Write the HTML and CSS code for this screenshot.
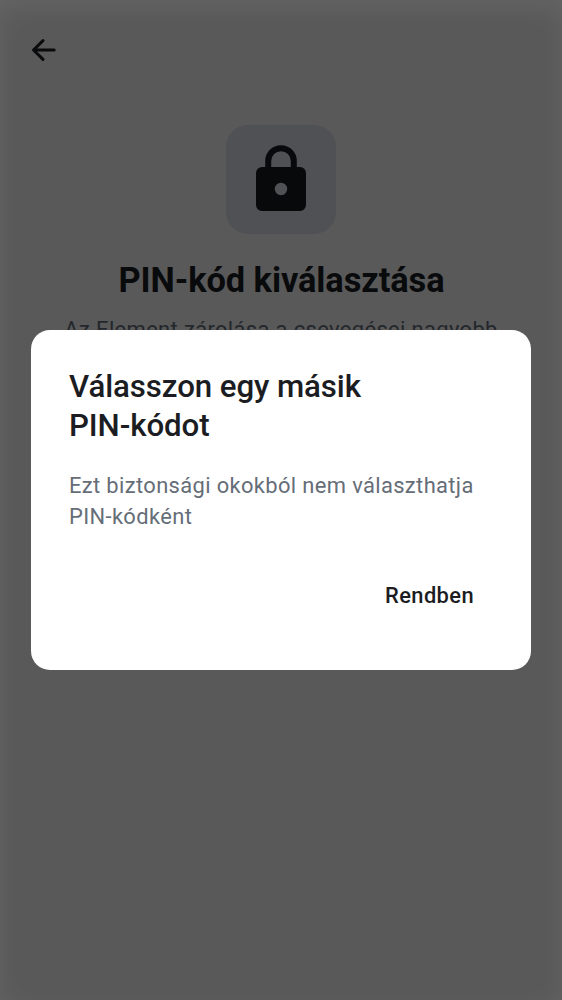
FILE: index.html
```html
<!DOCTYPE html>
<html lang="hu">
<head>
<meta charset="utf-8">
<title>PIN-kód kiválasztása</title>
<link rel="stylesheet" href="styles.css">
</head>
<body>
<main class="screen">
  <header class="topbar">
    <svg class="back" viewBox="0 0 38 38" aria-label="Vissza"><path d="M29.2 19H9M18 9.6L8.5 19L18 28.4" fill="none" stroke="currentColor" stroke-width="3" stroke-linecap="round" stroke-linejoin="round"/></svg>
  </header>
  <section class="intro">
    <div class="badge">
      <svg class="lock" viewBox="0 0 50 66"><path d="M12.2 25V16a12.8 12.8 0 0 1 25.6 0v9" fill="none" stroke="currentColor" stroke-width="6"/><path fill="currentColor" fill-rule="evenodd" d="M6 22H44A6 6 0 0 1 50 28V60A6 6 0 0 1 44 66H6A6 6 0 0 1 0 60V28A6 6 0 0 1 6 22ZM25 37.8a6.2 6.2 0 1 0 0 12.4a6.2 6.2 0 1 0 0-12.4Z"/></svg>
    </div>
    <h1 class="heading">PIN-kód kiválasztása</h1>
    <p class="summary">Az Element zárolása a csevegései nagyobb</p>
  </section>
  <div class="overlay">
    <div class="dialog" role="dialog">
      <h2 class="title">Válasszon egy másik<br>PIN-kódot</h2>
      <p class="message">Ezt biztonsági okokból nem választhatja<br>PIN-kódként</p>
      <div class="actions"><button class="confirm">Rendben</button></div>
    </div>
  </div>
</main>
</body>
</html>
```
FILE: styles.css
```css
* { box-sizing: border-box; }
body { margin: 0; font-family: Roboto, sans-serif; }
h1, h2, p { margin: 0; font-weight: 400; }
.screen {
  position: relative;
  width: 562px;
  height: 1000px;
  overflow: hidden;
  background: #595959;
}
.topbar { display: flex; align-items: center; height: 100px; padding-left: 25px; color: #0a0b0d; }
.back { width: 38px; height: 38px; }
.intro { display: flex; flex-direction: column; align-items: center; padding-top: 25px; }
.badge {
  display: flex;
  justify-content: center;
  width: 110px;
  height: 109px;
  padding-top: 20px;
  border-radius: 22px;
  background: #505155;
  color: #08090b;
}
.lock { width: 50px; height: 66px; }
.heading {
  margin-top: 25px;
  padding-left: 1px;
  font-size: 34.4px;
  line-height: 43px;
  font-weight: 700;
  letter-spacing: -.08px;
  white-space: nowrap;
  color: #090a0c;
}
.summary {
  margin-top: 12px;
  font-size: 21.9px;
  line-height: 31px;
  letter-spacing: .37px;
  white-space: nowrap;
  color: #23272c;
}
.overlay {
  position: absolute;
  inset: 0;
  display: flex;
  align-items: center;
  justify-content: center;
  box-shadow: inset 0 8px 26px 0 rgba(255, 255, 255, .07);
}
.dialog {
  width: 500px;
  height: 340px;
  padding: 37px 38px;
  border-radius: 19px;
  background: #fff;
}
.title {
  font-size: 31.25px;
  line-height: 39px;
  font-weight: 500;
  letter-spacing: -.09px;
  color: #1b1d22;
}
.message {
  margin-top: 25px;
  font-size: 21.9px;
  line-height: 31.2px;
  letter-spacing: .37px;
  white-space: nowrap;
  color: #656d77;
}
.actions { display: flex; justify-content: flex-end; margin-top: 47.5px; padding-right: 19px; }
.confirm {
  padding: 0;
  border: 0;
  background: none;
  font: 500 21.9px/32px Roboto, sans-serif;
  letter-spacing: .39px;
  color: #1b1d22;
}
```
